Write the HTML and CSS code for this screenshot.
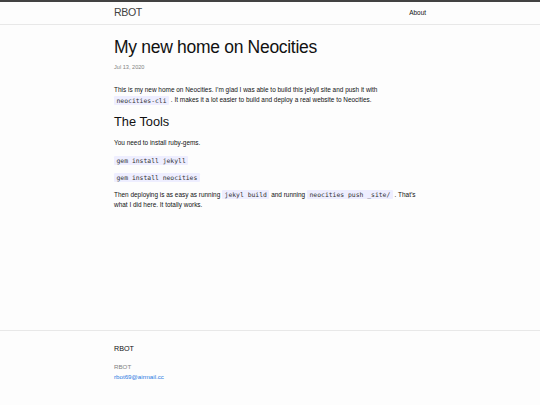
FILE: index.html
```html
<!DOCTYPE html>
<html lang="en">
<head>
<meta charset="utf-8">
<title>My new home on Neocities | RBOT</title>
<link rel="stylesheet" href="styles.css">
</head>
<body>
<header class="site-header">
  <div class="wrapper header-row">
    <a class="site-title" href="#">RBOT</a>
    <nav class="site-nav"><a class="page-link" href="#">About</a></nav>
  </div>
</header>
<main class="page-content">
  <div class="wrapper">
    <article class="post">
      <header class="post-header">
        <h1 class="post-title">My new home on Neocities</h1>
        <p class="post-meta">Jul 13, 2020</p>
      </header>
      <div class="post-content">
        <p>This is my new home on Neocities. I’m glad I was able to build this jekyll site and push it with <code>neocities-cli</code> . It makes it a lot easier to build and deploy a real website to Neocities.</p>
        <h2>The Tools</h2>
        <p>You need to install ruby-gems.</p>
        <p><code>gem install jekyll</code></p>
        <p><code>gem install neocities</code></p>
        <p>Then deploying is as easy as running <code>jekyl build</code> and running <code>neocities push _site/</code> . That’s what I did here. It totally works.</p>
      </div>
    </article>
  </div>
</main>
<footer class="site-footer">
  <div class="wrapper">
    <h2 class="footer-heading">RBOT</h2>
    <ul class="contact-list">
      <li class="p-name">RBOT</li>
      <li><a class="u-email" href="#">rbot69@airmail.cc</a></li>
    </ul>
  </div>
</footer>
</body>
</html>
```
FILE: styles.css
```css
html, body {
  margin: 0;
  padding: 0;
}
body {
  font-family: "Liberation Sans", Arial, sans-serif;
  font-size: 6.45px;
  line-height: 1.6;
  color: #111111;
  background: #fdfdfd;
  display: flex;
  flex-direction: column;
  min-height: 100vh;
}
a {
  text-decoration: none;
}
.wrapper {
  width: 312px;
  margin: 0 auto;
}
.site-header {
  border-top: 2px solid #424242;
  border-bottom: 1px solid #e8e8e8;
  min-height: 22.4px;
}
.header-row {
  display: flex;
  justify-content: space-between;
  align-items: center;
}
.site-title {
  font-size: 10.6px;
  line-height: 21.6px;
  letter-spacing: -0.4px;
  color: #424242;
}
.page-link {
  color: #111111;
  line-height: 21.6px;
}
.page-content {
  flex: 1;
  padding: 13.5px 0 12px;
}
.post-header {
  margin-bottom: 13px;
}
.post-title {
  font-size: 17.5px;
  font-weight: 400;
  letter-spacing: -0.3px;
  line-height: 1;
  margin: 0 0 7px;
}
.post-meta {
  font-size: 5.6px;
  line-height: 1.5;
  color: #828282;
  margin: 0;
}
.post-content p {
  margin: 0 0 6.8px;
}
.post-content h2 {
  font-size: 12.8px;
  font-weight: 400;
  line-height: 1.5;
  margin: 0 0 6.8px;
}
code {
  font-family: "DejaVu Sans Mono", monospace;
  font-size: 6.4px;
  color: #333333;
  background: #eeeeff;
  border-radius: 1.2px;
  padding: 0.5px 2.5px;
  white-space: nowrap;
}
.site-footer {
  border-top: 1px solid #e8e8e8;
  padding: 13.5px 0 23.5px;
}
.footer-heading {
  font-size: 7.2px;
  font-weight: 400;
  line-height: 1.5;
  margin: 0 0 6.5px;
}
.contact-list {
  list-style: none;
  margin: 0;
  padding: 0;
  font-size: 6.2px;
  color: #828282;
}
.u-email {
  color: #2a7ae2;
}
```
